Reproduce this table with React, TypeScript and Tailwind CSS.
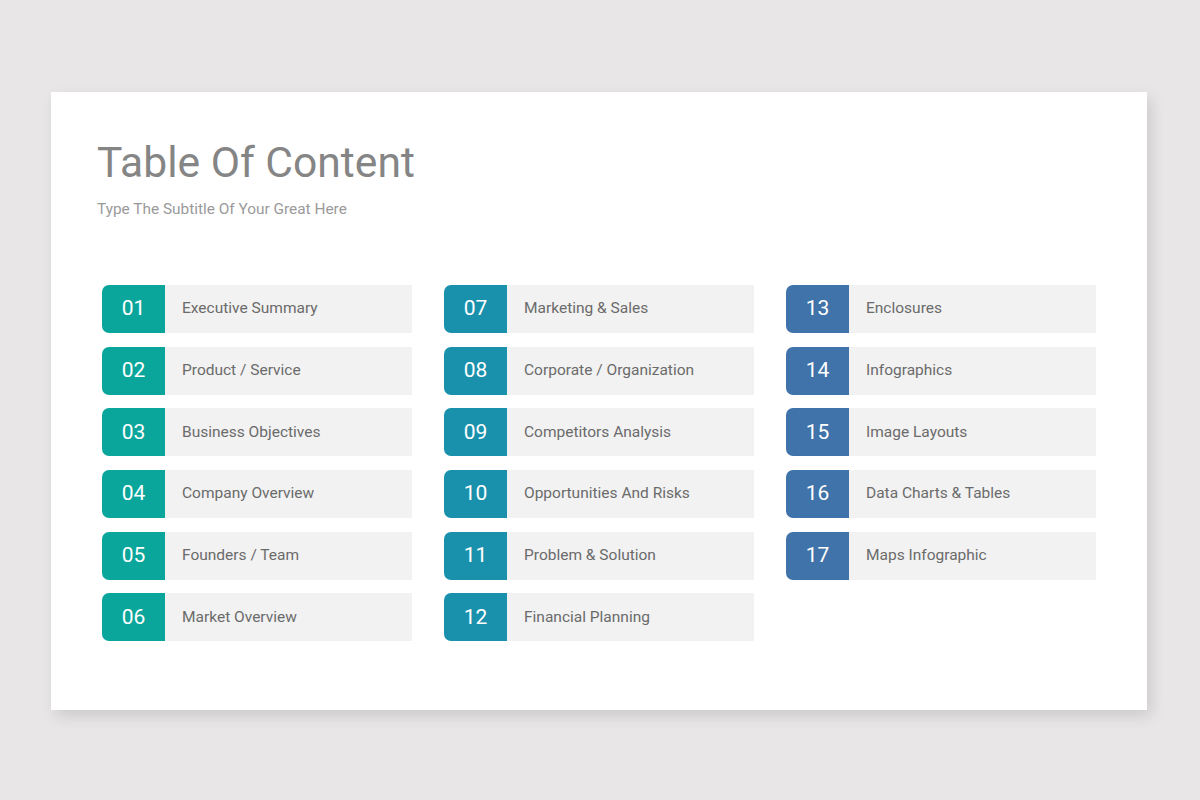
const columns = [
  {
    color: "bg-[#0aa69b]",
    items: [
      ["01", "Executive Summary"],
      ["02", "Product / Service"],
      ["03", "Business Objectives"],
      ["04", "Company Overview"],
      ["05", "Founders / Team"],
      ["06", "Market Overview"],
    ],
  },
  {
    color: "bg-[#1a91ac]",
    items: [
      ["07", "Marketing & Sales"],
      ["08", "Corporate / Organization"],
      ["09", "Competitors Analysis"],
      ["10", "Opportunities And Risks"],
      ["11", "Problem & Solution"],
      ["12", "Financial Planning"],
    ],
  },
  {
    color: "bg-[#3f73a9]",
    items: [
      ["13", "Enclosures"],
      ["14", "Infographics"],
      ["15", "Image Layouts"],
      ["16", "Data Charts & Tables"],
      ["17", "Maps Infographic"],
    ],
  },
];

const App = () => {
  return (
    <div
      className="min-h-screen w-full bg-[#e8e6e7] pt-[92px] pl-[51px]"
      style={{ fontFamily: "Roboto, 'Liberation Sans', sans-serif" }}
    >
      <div className="w-[1096px] h-[618px] bg-white shadow-[4px_6px_14px_rgba(0,0,0,0.12)] pl-[46px] pt-[44px]">
        <h1 className="text-[42.6px] leading-[52px] text-[#858585] font-normal">
          Table Of Content
        </h1>
        <p className="mt-[11px] text-[15.4px] leading-[20px] text-[#9a9a9a]">
          Type The Subtitle Of Your Great Here
        </p>

        <div className="mt-[66px] ml-[5px] flex gap-[32px]">
          {columns.map((col, ci) => (
            <div key={ci} className="flex flex-col gap-[13.7px] w-[310px]">
              {col.items.map(([num, label]) => (
                <div key={num} className="flex h-[48px]">
                  <div
                    className={`${col.color} w-[63px] rounded-l-[7px] flex items-center justify-center text-white text-[21px]`}
                  >
                    {num}
                  </div>
                  <div className="flex-1 bg-[#f2f2f2] flex items-center pl-[17px] text-[15.5px] text-[#6b6b6b]">
                    {label}
                  </div>
                </div>
              ))}
            </div>
          ))}
        </div>
      </div>
    </div>
  );
};

export default App;
